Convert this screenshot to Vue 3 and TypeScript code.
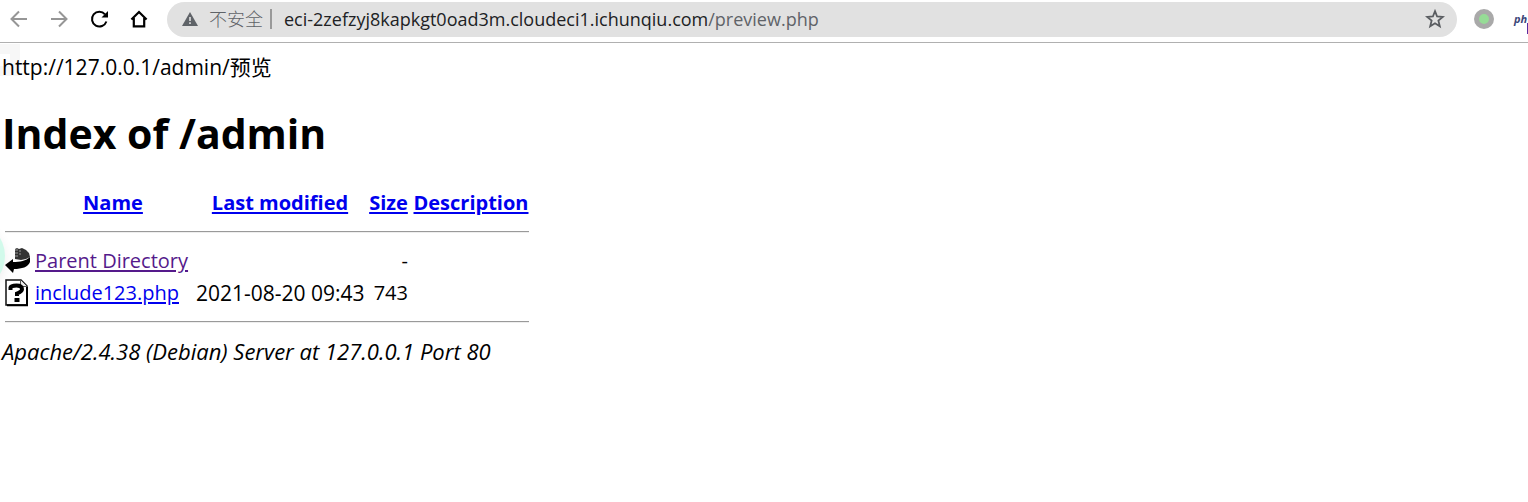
<script setup lang="ts">
interface Entry {
  icon: 'back' | 'unknown'
  name: string
  href: string
  visited: boolean
  modified: string
  size: string
}

const columns: string[] = ['Name', 'Last modified', 'Size', 'Description']

const entries: Entry[] = [
  { icon: 'back', name: 'Parent Directory', href: '#parent', visited: true, modified: '', size: '-' },
  { icon: 'unknown', name: 'include123.php', href: '#include123', visited: false, modified: '2021-08-20 09:43', size: '743' },
]
</script>

<template>
  <div class="browser">
    <header class="toolbar">
      <nav class="nav">
        <button class="tool" type="button" aria-label="Back">
          <svg width="20" height="20" viewBox="0 0 20 20" fill="none" stroke="#969696" stroke-width="2"><path d="M18 10H3M10 2.500L2.500 10l7.500 7.500" /></svg>
        </button>
        <button class="tool" type="button" aria-label="Forward">
          <svg width="20" height="20" viewBox="0 0 20 20" fill="none" stroke="#969696" stroke-width="2"><path d="M2 10h15M10 2.500L17.500 10 10 17.500" /></svg>
        </button>
        <button class="tool" type="button" aria-label="Reload">
          <svg width="20" height="20" viewBox="0 0 20 20"><path d="M17.400 12.500A7.400 7.400 0 1 1 16 5.300" fill="none" stroke="#000" stroke-width="2" /><path d="M19 2v6.500h-6.500z" /></svg>
        </button>
        <button class="tool" type="button" aria-label="Home">
          <svg width="20" height="20" viewBox="0 0 20 20" fill="none" stroke="#000" stroke-width="2.200"><path d="M2.400 10.500L10 3l7.600 7.500M4.800 9v8.400h10.400V9" /></svg>
        </button>
      </nav>

      <div class="omnibox">
        <svg class="warning" width="16" height="16" viewBox="0 0 16 16"><path d="M8 1l8 14H0z" fill="#5f6368" /><path d="M7.200 6h1.600v4H7.200zM7.200 11.300h1.600V13H7.200z" fill="#e1e1e1" /></svg>
        <span class="security">不安全</span>
        <span class="divider"></span>
        <span class="address">eci-2zefzyj8kapkgt0oad3m.cloudeci1.ichunqiu.com<span class="path">/preview.php</span></span>
        <button class="star" type="button" aria-label="Bookmark this page">
          <svg width="20" height="20" viewBox="0 0 20 20" fill="none" stroke="#5a5d61" stroke-width="1.800"><path d="M10 2.200l2.100 5.300 5.700.4-4.400 3.700 1.400 5.600L10 14.200l-4.800 3 1.400-5.600-4.400-3.700 5.700-.4z" /></svg>
        </button>
      </div>

      <div class="extensions">
        <button class="status" type="button" aria-label="Extension status"></button>
        <button class="php" type="button" aria-label="PHP extension">
          <span>ph</span><span class="php-badge"></span>
        </button>
      </div>
    </header>

    <main class="page">
      <div class="corner"></div>
      <div class="glow"></div>
      <p class="source">http://127.0.0.1/admin/预览</p>
      <h1>Index of /admin</h1>

      <table>
        <colgroup>
          <col class="c-icon" /><col class="c-name" /><col class="c-date" /><col class="c-size" /><col class="c-desc" />
        </colgroup>
        <thead>
          <tr>
            <td></td>
            <th v-for="column in columns" :key="column" scope="col"><a href="#sort">{{ column }}</a></th>
          </tr>
        </thead>
        <tbody>
          <tr class="rule"><td colspan="5"><hr /></td></tr>
          <tr v-for="entry in entries" :key="entry.name">
            <td>
              <svg v-if="entry.icon === 'back'" class="icon" width="25" height="28" viewBox="0 0 25 28">
                <path d="M10 2l2-1 2 1 3-1 4 2 3 3 1 4-4 2-5 1-6-1z" fill="#333" />
                <path d="M10 3h3M10 6h3M10 9h3M14 4h2M14 7h2" stroke="#999" stroke-width="1" />
                <path d="M0 18l8-6v3c7 0 13-1 17-5v5c-2 5-8 7-16 7l-1 4z" />
              </svg>
              <svg v-else class="icon" width="25" height="28" viewBox="0 0 25 28">
                <path d="M1 1h15l6 6v19H1z" fill="#fff" stroke="#111" stroke-width="1.500" />
                <path d="M15.500 1v6.500H22" fill="#eee" stroke="#555" />
                <path d="M2 26.200h20V8" fill="none" stroke="#000" stroke-width="2" />
                <path d="M5.500 11V8.500Q6 6.500 11.500 6.500 17 6.500 17 10.300 17 12.500 12 14.500V17" fill="none" stroke="#000" stroke-width="4" />
                <path d="M9.500 19h5v4h-5z" />
              </svg>
            </td>
            <td><a :href="entry.href" :class="{ visited: entry.visited }">{{ entry.name }}</a></td>
            <td class="date">{{ entry.modified }}</td>
            <td class="right">{{ entry.size }}</td>
            <td></td>
          </tr>
          <tr class="rule"><td colspan="5"><hr /></td></tr>
        </tbody>
      </table>

      <address class="server">Apache/2.4.38 (Debian) Server at 127.0.0.1 Port 80</address>
    </main>
  </div>
</template>

<style>
body {
  margin: 0;
  background: #fff;
}
</style>

<style scoped>
.browser {
  min-height: 100vh;
  overflow: hidden;
  color: #000;
  font-family: "Open Sans", "Noto Sans CJK SC", sans-serif;
  font-size: 20px;
  line-height: 28px;
}

button {
  padding: 0;
  border: 0;
  background: none;
  font: inherit;
}

.toolbar {
  display: flex;
  align-items: center;
  height: 43px;
  padding-bottom: 4px;
  box-sizing: border-box;
  border-bottom: 1px solid #b0b0b0;
}

.nav {
  display: flex;
  gap: 20px;
  padding-left: 9px;
}

.tool,
.star {
  display: flex;
  width: 20px;
  height: 20px;
}

.omnibox {
  display: flex;
  flex: 1;
  align-items: center;
  min-width: 0;
  height: 35px;
  margin-left: 18px;
  padding: 0 12px 0 15px;
  box-sizing: border-box;
  border-radius: 18px;
  background: #e1e1e1;
  font-size: 18px;
  white-space: nowrap;
}

.security {
  margin-left: 11px;
  color: #5f6368;
  font-weight: 300;
}

.divider {
  width: 2px;
  height: 20px;
  margin: 0 12px 0 7px;
  background: #999;
}

.address {
  flex: 1;
  color: #202124;
}

.path {
  color: #5f6368;
}

.extensions {
  display: flex;
  flex: none;
  align-items: center;
  gap: 20px;
  width: 54px;
  margin-left: 17px;
  overflow: hidden;
}

.status {
  flex: none;
  width: 20px;
  height: 20px;
  border: 5px solid #a9a9a9;
  border-radius: 50%;
  background: #96dc96;
}

.php {
  position: relative;
  flex: none;
  height: 30px;
  color: #3c4678;
  font-size: 11px;
  font-style: italic;
  font-weight: 700;
  line-height: 28px;
}

.php-badge {
  position: absolute;
  top: 19px;
  left: 13px;
  width: 12px;
  height: 12px;
  background: #5a2ca0;
}

.page {
  position: relative;
}

.corner {
  position: absolute;
  top: 1px;
  left: 0;
  width: 20px;
  height: 32px;
  box-sizing: border-box;
  border: solid #f7f7f7;
  border-width: 10px 10px 10px 0;
}

.glow {
  position: absolute;
  top: 178px;
  left: -65px;
  width: 70px;
  height: 70px;
  border-radius: 50%;
  background: #d2faeb;
  box-shadow: 0 4px 12px #eee;
}

.source {
  position: relative;
  margin: 0;
  padding: 10px 2px 0;
  font-size: 21px;
}

h1 {
  margin: 24px 0 0;
  padding-left: 2px;
  font-size: 41px;
  font-weight: 700;
  line-height: 56px;
}

table {
  position: relative;
  width: 534px;
  margin-top: 24px;
  border-spacing: 5px 4px;
  table-layout: fixed;
  white-space: nowrap;
}

.c-icon {
  width: 25px;
}

.c-name {
  width: 156px;
}

.c-date {
  width: 168px;
}

.c-size {
  width: 39px;
}

.c-desc {
  width: 116px;
}

td,
th {
  height: 28px;
  padding: 0;
  text-align: left;
}

th {
  text-align: center;
}

.right,
.date {
  text-align: right;
}

.date {
  font-size: 21px;
}

.rule td {
  height: 22px;
}

.icon {
  display: block;
}

hr {
  margin: 0;
  border: 0;
  border-top: 1px solid #9a9a9a;
  border-bottom: 1px solid #eee;
}

a {
  color: #00e;
  text-decoration-thickness: 2px;
  text-underline-offset: 2px;
}

a.visited {
  color: #551a8b;
}

.server {
  padding-left: 2px;
  font-size: 22px;
}
</style>
